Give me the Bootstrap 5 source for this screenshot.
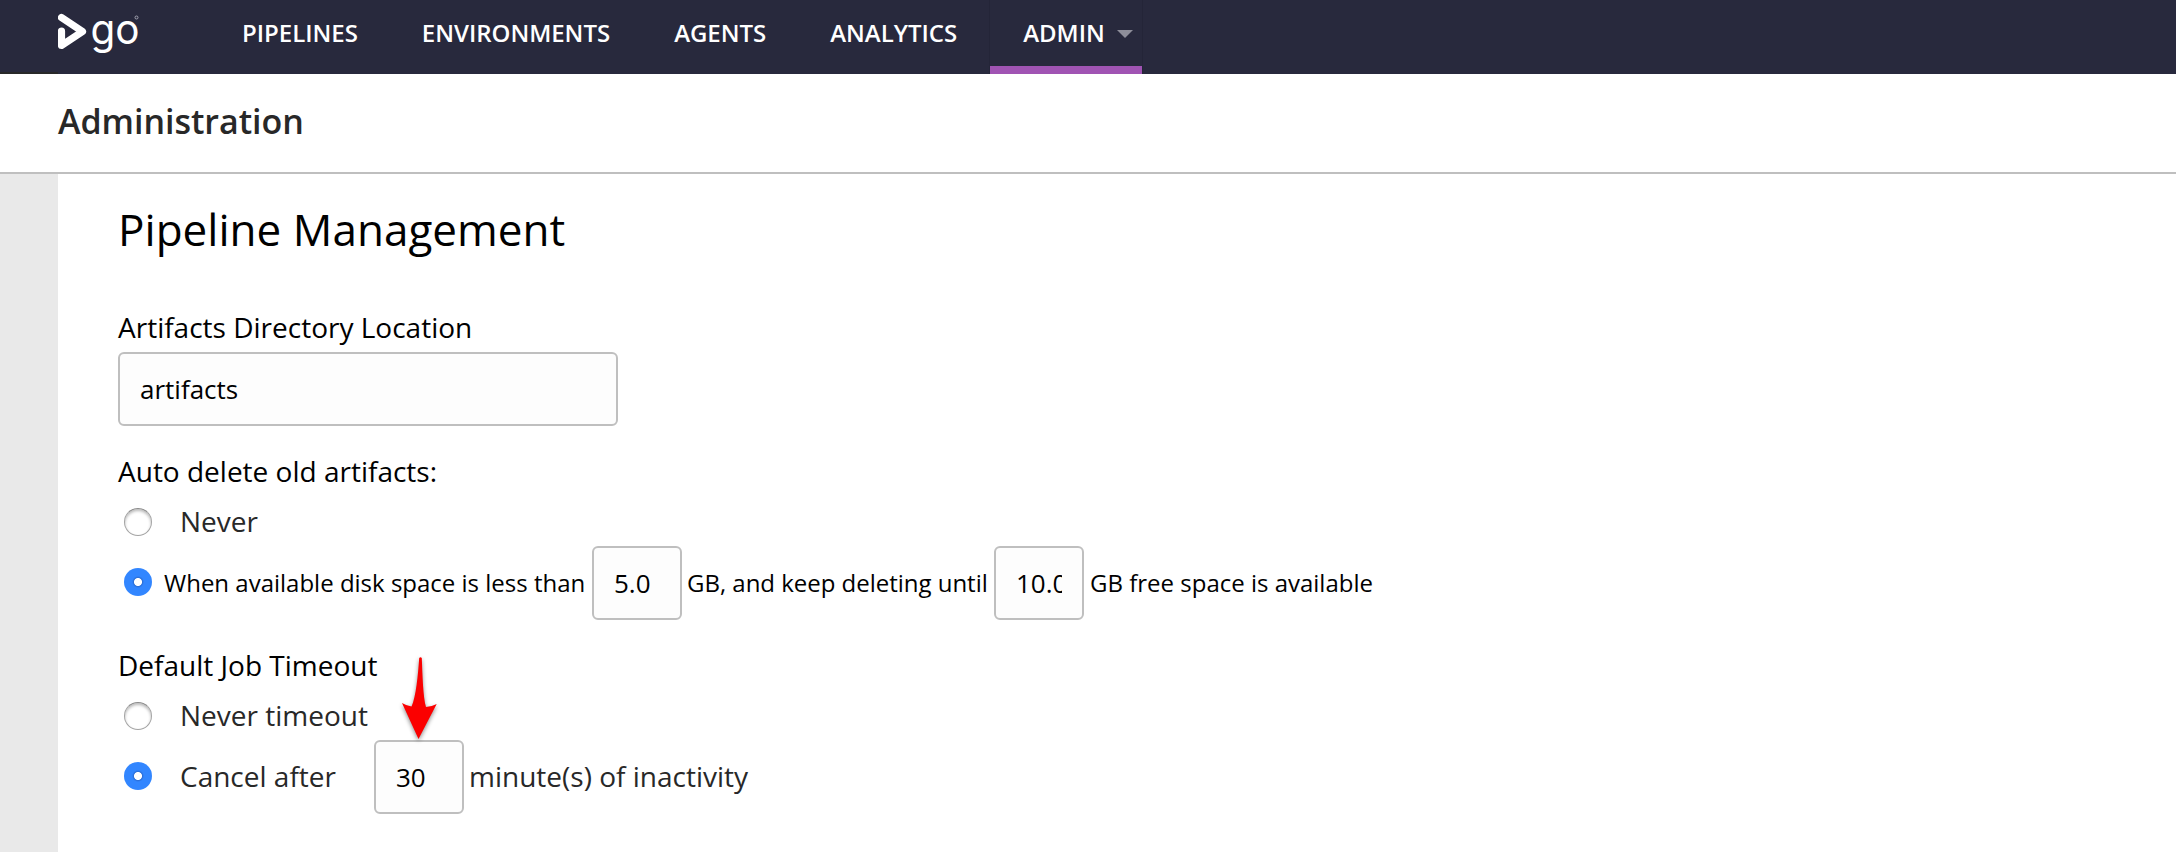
<!DOCTYPE html>
<html lang="en">
<head>
<meta charset="utf-8">
<title>Administration</title>
<link href="https://cdn.jsdelivr.net/npm/bootstrap@5.3.0/dist/css/bootstrap.min.css" rel="stylesheet">
<style>
body{font-family:"Open Sans","Noto Sans",sans-serif;color:#000;background:#fff;height:852px;overflow:hidden;font-size:28px;line-height:38px}
.top-nav{height:74px;background:linear-gradient(#282828,#282828) 0 100%/58px 2px no-repeat #28293d;padding:0 0 0 58px;flex-wrap:nowrap;justify-content:flex-start;align-items:stretch}
.logo{width:152px;height:74px;flex:none}
.top-nav .nav-link{color:#fff;font-size:24px;font-weight:600;line-height:34px;padding:16px 32px 0;height:74px;white-space:nowrap;letter-spacing:-.02px}
.top-nav .nav-link.active{border-bottom:8px solid #a054b3;margin-left:1px;padding:16px 9px 0 33px;display:flex;gap:12px;box-shadow:-1px 0 #242538,1px 0 #242538}
.nav-link .arrow{margin-top:14px}
.page-head{height:100px;border-bottom:2px solid #bfbfbf;padding:23px 0 0 58px}
.page-head h1{font-size:34px;line-height:48px;font-weight:600;color:#282828;margin:0;letter-spacing:-.04px}
.gutter-bar{width:58px;background:#e9e9e9;flex:none}
.content{padding:25px 0 0 60px}
.content h2{font-size:44px;line-height:60px;font-weight:400;margin:0 0 49px;white-space:nowrap;letter-spacing:.03px}
.lbl{height:44px;white-space:nowrap}
.lbl-next{margin-top:26px}
.form-control.box{height:74px;border:2px solid #bfbfbf;border-radius:6px;background:#fdfdfd;padding:0 20px;font-size:26px;color:#000;width:90px;flex:none}
.form-control.wide{width:500px}
.form-check-input.dot{width:28px;height:28px;margin:0 0 2px 6px;float:none;flex:none;border:1px solid #a4a4a4;border-top-color:#8a8a8a;box-shadow:inset 0 2px 3px #bbb;background:#fff}
.plain .form-check-input.dot{margin:2px 0 0 6px}
.form-check-input.dot:checked{border:0;box-shadow:none;background:radial-gradient(circle,#fff 0 3.6px,#2c6fd8 4.4px,#3286ff 6px)}
.opt{height:74px;white-space:nowrap}
.opt.plain{height:50px}
.opt-text{color:#282828;margin-left:28px}
.opt-cancel{width:194px;margin-bottom:3px}
.opt-unit{margin:0 0 3px 5px}
.small-text{font-size:24px;margin-left:6px}
.small-text.lead-in{margin-left:12px;width:428px}
.small-text.between{margin-left:5px;width:307px;letter-spacing:-.02px}
.pointer{position:absolute;left:280px;top:-87px;filter:drop-shadow(0 2px 2px rgba(0,0,0,.45))}
</style>
</head>
<body class="d-flex flex-column">
<nav class="navbar top-nav">
  <svg class="logo" viewBox="58 0 152 74" fill="none">
    <path d="M61.5 31V45.5L82.500 31.500L61.500 17.500" stroke="#fff" stroke-width="7.200" stroke-linecap="round" stroke-linejoin="round"/>
    <text x="90.500" y="44" fill="#fff" font-family="Inter, sans-serif" font-size="42" font-weight="400" textLength="49" lengthAdjust="spacingAndGlyphs">go</text>
    <circle cx="136.500" cy="17.500" r="1.500" stroke="#b8b8c4" stroke-width=".8"/>
  </svg>
  <div class="d-flex">
    <a class="nav-link">PIPELINES</a>
    <a class="nav-link">ENVIRONMENTS</a>
    <a class="nav-link">AGENTS</a>
    <a class="nav-link">ANALYTICS</a>
    <a class="nav-link active">ADMIN<svg class="arrow" width="16" height="8"><path d="M0 0H16L8 8Z" fill="#8e8e9a"/></svg></a>
  </div>
</nav>
<header class="page-head"><h1>Administration</h1></header>
<div class="d-flex flex-grow-1">
  <aside class="gutter-bar"></aside>
  <main class="content">
    <h2>Pipeline Management</h2>
    <div class="lbl">Artifacts Directory Location</div>
    <input class="form-control box wide" value="artifacts">
    <div class="lbl lbl-next">Auto delete old artifacts:</div>
    <div class="opt plain d-flex align-items-center"><input type="radio" name="del" class="form-check-input dot"><span class="opt-text">Never</span></div>
    <div class="opt d-flex align-items-center"><input type="radio" name="del" class="form-check-input dot" checked><span class="small-text lead-in">When available disk space is less than</span><input class="form-control box" value="5.0"><span class="small-text between">GB, and keep deleting until</span><input class="form-control box" value="10.0"><span class="small-text">GB free space is available</span></div>
    <div class="lbl lbl-next">Default Job Timeout</div>
    <div class="opt plain d-flex align-items-center"><input type="radio" name="job" class="form-check-input dot"><span class="opt-text">Never timeout</span></div>
    <div class="opt d-flex align-items-center position-relative"><input type="radio" name="job" class="form-check-input dot" checked><span class="opt-text opt-cancel">Cancel after</span><input class="form-control box" value="30"><span class="opt-text opt-unit">minute(s) of inactivity</span>
      <svg class="pointer" width="44" height="92" viewBox="398 653 44 92"><path d="M419.200 658Q420.500 656.500 421.800 658C422.500 675 423 697 426 707Q431 707 436.700 704L418.500 739L402 703Q407 706 411.500 706.500C416 697 418 675 419.200 658Z" fill="#fb0000"/></svg>
    </div>
  </main>
</div>
<script src="https://cdn.jsdelivr.net/npm/bootstrap@5.3.0/dist/js/bootstrap.bundle.min.js"></script>
</body>
</html>
